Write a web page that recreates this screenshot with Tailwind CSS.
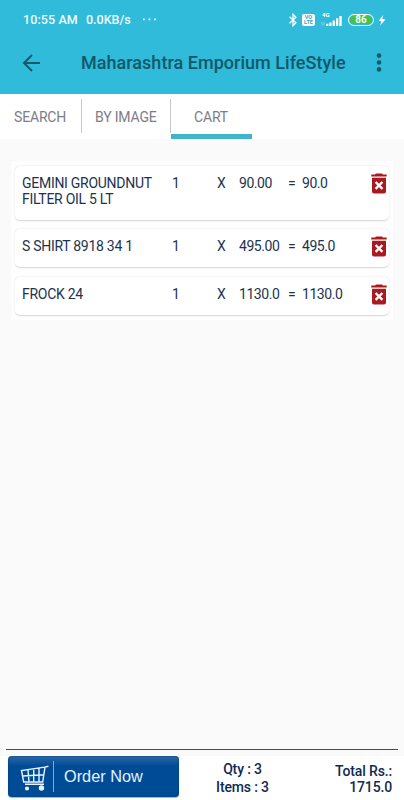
<!DOCTYPE html>
<html lang="en">
<head>
<meta charset="utf-8">
<title>Cart</title>
<script src="https://cdn.jsdelivr.net/npm/@tailwindcss/browser@4"></script>
</head>
<body class="bg-[#fafafa]">
<svg class="hidden">
  <symbol id="trash" viewBox="0 0 16 21">
    <path fill="#a81a20" d="M.3 1.6H4L5 .4h6l1 1.2h3.7v2H.3zM1 4.8h14v13.6a2 2 0 0 1-2 2H3a2 2 0 0 1-2-2z"/>
    <path stroke="#fff" stroke-width="2.4" fill="none" d="M4.6 9l6.8 6.8M11.4 9l-6.8 6.8"/>
  </symbol>
</svg>
<div class="w-[404px] h-[800px] flex flex-col overflow-hidden font-['Roboto',sans-serif] text-[#1c3350]">
  <header class="h-[94px] bg-[#2fbbd9] flex flex-col shrink-0">
    <div class="h-10 pl-[23px] pr-[18px] flex items-center text-[#f2fdff] text-[12.5px] font-medium whitespace-nowrap">
      <span class="w-[63px] tracking-[0.1px]">10:55 AM</span>
      <span class="w-[56px]">0.0KB/s</span>
      <svg class="w-4 h-4" viewBox="0 0 16 16" fill="#fff"><path d="M1 6.5h1.7v1.7H1zM6.6 6.5h1.7v1.7H6.6zM12.2 6.5h1.7v1.7h-1.7z"/></svg>
      <div class="ml-auto flex items-center">
        <svg class="w-[8px] h-[14px] mr-[5px]" viewBox="0 0 8 14" fill="none" stroke="#fff" stroke-width="1.3"><path d="M.6 3.8l6.3 6L4 12.7V1.3l2.9 2.9-6.3 6"/></svg>
        <div class="w-[13px] h-[12px] mr-[6px] bg-white rounded-[2px] flex flex-col items-center justify-center text-[5.5px] leading-[5px] font-bold text-[#2fa9c4]"><span>VO</span><span>LTE</span></div>
        <svg class="w-[21px] h-[18px] mr-[6px] -mt-[4px] overflow-visible" viewBox="0 0 21 18" fill="#fff"><text x="1" y="8" font-size="6" font-weight="700">4G</text><path d="M5 14.8h2.3V17H5zM8.2 13.4h2.3V17H8.2zM11.6 11.4h2.3V17h-2.3zM15 9.3h2.3V17H15zM18.4 7h2.3v10h-2.3z"/><path d="M1 13v3.5M3 13v3.5" stroke="#fff" stroke-width=".7" opacity=".6"/></svg>
        <div class="w-[26px] h-[12px] mr-[4px] rounded-full border-[1.5px] border-white p-px flex"><div class="flex-1 rounded-full bg-[#45c146] text-[10px] leading-[8px] font-bold text-center">86</div></div>
        <svg class="w-[8px] h-[12px]" viewBox="0 0 8 12" fill="#fff"><path d="M5.3.8L.7 6.8l2.9.4L2 11.4l5.5-6-3.2-.5z"/></svg>
      </div>
    </div>
    <div class="h-[45px] pl-[22px] pr-[22px] flex items-center">
      <svg class="w-[19px] h-[18px] mr-[40px]" viewBox="0 0 19 18" fill="none" stroke="#155a6a" stroke-width="2"><path d="M18 9H2.2M10 1L2 9l8 8"/></svg>
      <h1 class="text-[18px] font-medium text-[#12586a] tracking-[0.03px] whitespace-nowrap">Maharashtra Emporium LifeStyle</h1>
      <svg class="w-[6px] h-[19px] ml-auto" viewBox="0 0 6 19" fill="#155a6a"><circle cx="3" cy="2.6" r="2.3"/><circle cx="3" cy="9.5" r="2.3"/><circle cx="3" cy="16.4" r="2.3"/></svg>
    </div>
  </header>

  <nav class="h-[45px] bg-white flex shrink-0 text-[14px] tracking-[-0.17px] leading-[46px] text-[#7d7c89] whitespace-nowrap">
    <div class="w-[81px] pl-[14px]">SEARCH</div>
    <div class="w-px h-[34px] mt-[5px] bg-[#c6c6c9]"></div>
    <div class="w-[88px] pl-[13px]">BY IMAGE</div>
    <div class="w-px h-[34px] mt-[5px] bg-[#c6c6c9]"></div>
    <div class="w-[81px] pl-[23px] border-b-[5px] border-[#3fb4cb]">CART</div>
  </nav>

  <main class="mt-[22px] ml-[11px] w-[382px] h-[159px] bg-[#fefefe] pt-[5px] px-[4px] flex flex-col shrink-0 text-[14px] tracking-[-0.28px] leading-4">
    <div class="h-[54px] mb-[9px] pt-[9px] pl-[7px] flex items-start bg-white rounded-[5px] shadow-[0_0.5px_1.5px_rgba(0,0,0,0.16)]">
      <div class="w-[150px]">GEMINI GROUNDNUT<br>FILTER OIL 5 LT</div><div class="w-[45px]">1</div><div class="w-[22px]">X</div><div class="w-[49px] tracking-[-0.45px]">90.00</div><div class="w-[14px]">=</div><div class="w-[69px] tracking-[-0.45px]">90.0</div>
      <svg class="w-4 h-[21px] -mt-[2px] shrink-0"><use href="#trash"/></svg>
    </div>
    <div class="h-[38px] mb-[10px] pt-[9px] pl-[7px] flex items-start bg-white rounded-[5px] shadow-[0_0.5px_1.5px_rgba(0,0,0,0.16)]">
      <div class="w-[150px]">S SHIRT 8918 34 1</div><div class="w-[45px]">1</div><div class="w-[22px]">X</div><div class="w-[49px] tracking-[-0.45px]">495.00</div><div class="w-[14px]">=</div><div class="w-[69px] tracking-[-0.45px]">495.0</div>
      <svg class="w-4 h-[21px] -mt-[2px] shrink-0"><use href="#trash"/></svg>
    </div>
    <div class="h-[38px] pt-[9px] pl-[7px] flex items-start bg-white rounded-[5px] shadow-[0_0.5px_1.5px_rgba(0,0,0,0.16)]">
      <div class="w-[150px]">FROCK 24</div><div class="w-[45px]">1</div><div class="w-[22px]">X</div><div class="w-[49px] tracking-[-0.45px]">1130.0</div><div class="w-[14px]">=</div><div class="w-[69px] tracking-[-0.45px]">1130.0</div>
      <svg class="w-4 h-[21px] -mt-[2px] shrink-0"><use href="#trash"/></svg>
    </div>
  </main>

  <footer class="mt-auto h-[51px] shrink-0">
    <div class="mx-[6px] h-px bg-[#4c4c4c]"></div>
    <div class="h-[6px]"></div>
    <div class="h-[44px] bg-white flex text-[14px] tracking-[-0.15px] font-medium text-[#102a52]">
      <button class="ml-2 w-[171px] h-[41px] rounded-[4px] bg-linear-to-b from-[#2867a8] via-[#004b96] via-25% to-[#004b96] shadow-[inset_0_0_2px_#063569,0_1px_1px_#9ab4d0] flex items-center text-[#e2f4ff] font-normal tracking-normal whitespace-nowrap">
        <svg class="w-[30px] h-[28px] ml-[12px] mt-[2px]" viewBox="0 0 30 28" fill="none" stroke="#e4f5ff" stroke-width="1.4"><path d="M28.5 2.2l-4 .9L1.5 6.500l2.200 11.500h19L25 3.2M2.6 12l21-1.3M8 5.7l1 12.3M13.7 5v13M19 4.2V18M5 20.2h19"/><circle cx="7" cy="24.5" r="1.4" fill="#e4f5ff"/><circle cx="21.5" cy="24" r="2" fill="#e4f5ff"/></svg>
        <span class="w-px h-[31px] ml-[3px] bg-[#7fa9d3]"></span>
        <span class="ml-[10px] text-[16.3px] leading-none font-['Liberation_Sans',Arial,sans-serif]">Order Now</span>
      </button>
      <div class="ml-[13px] w-[101px] text-center leading-[18px] pt-[4px]"><div>Qty : 3</div><div>Items : 3</div></div>
      <div class="ml-auto pr-[12px] text-right leading-4 pt-[7px]"><div>Total Rs.:</div><div>1715.0</div></div>
    </div>
  </footer>
</div>
</body>
</html>
